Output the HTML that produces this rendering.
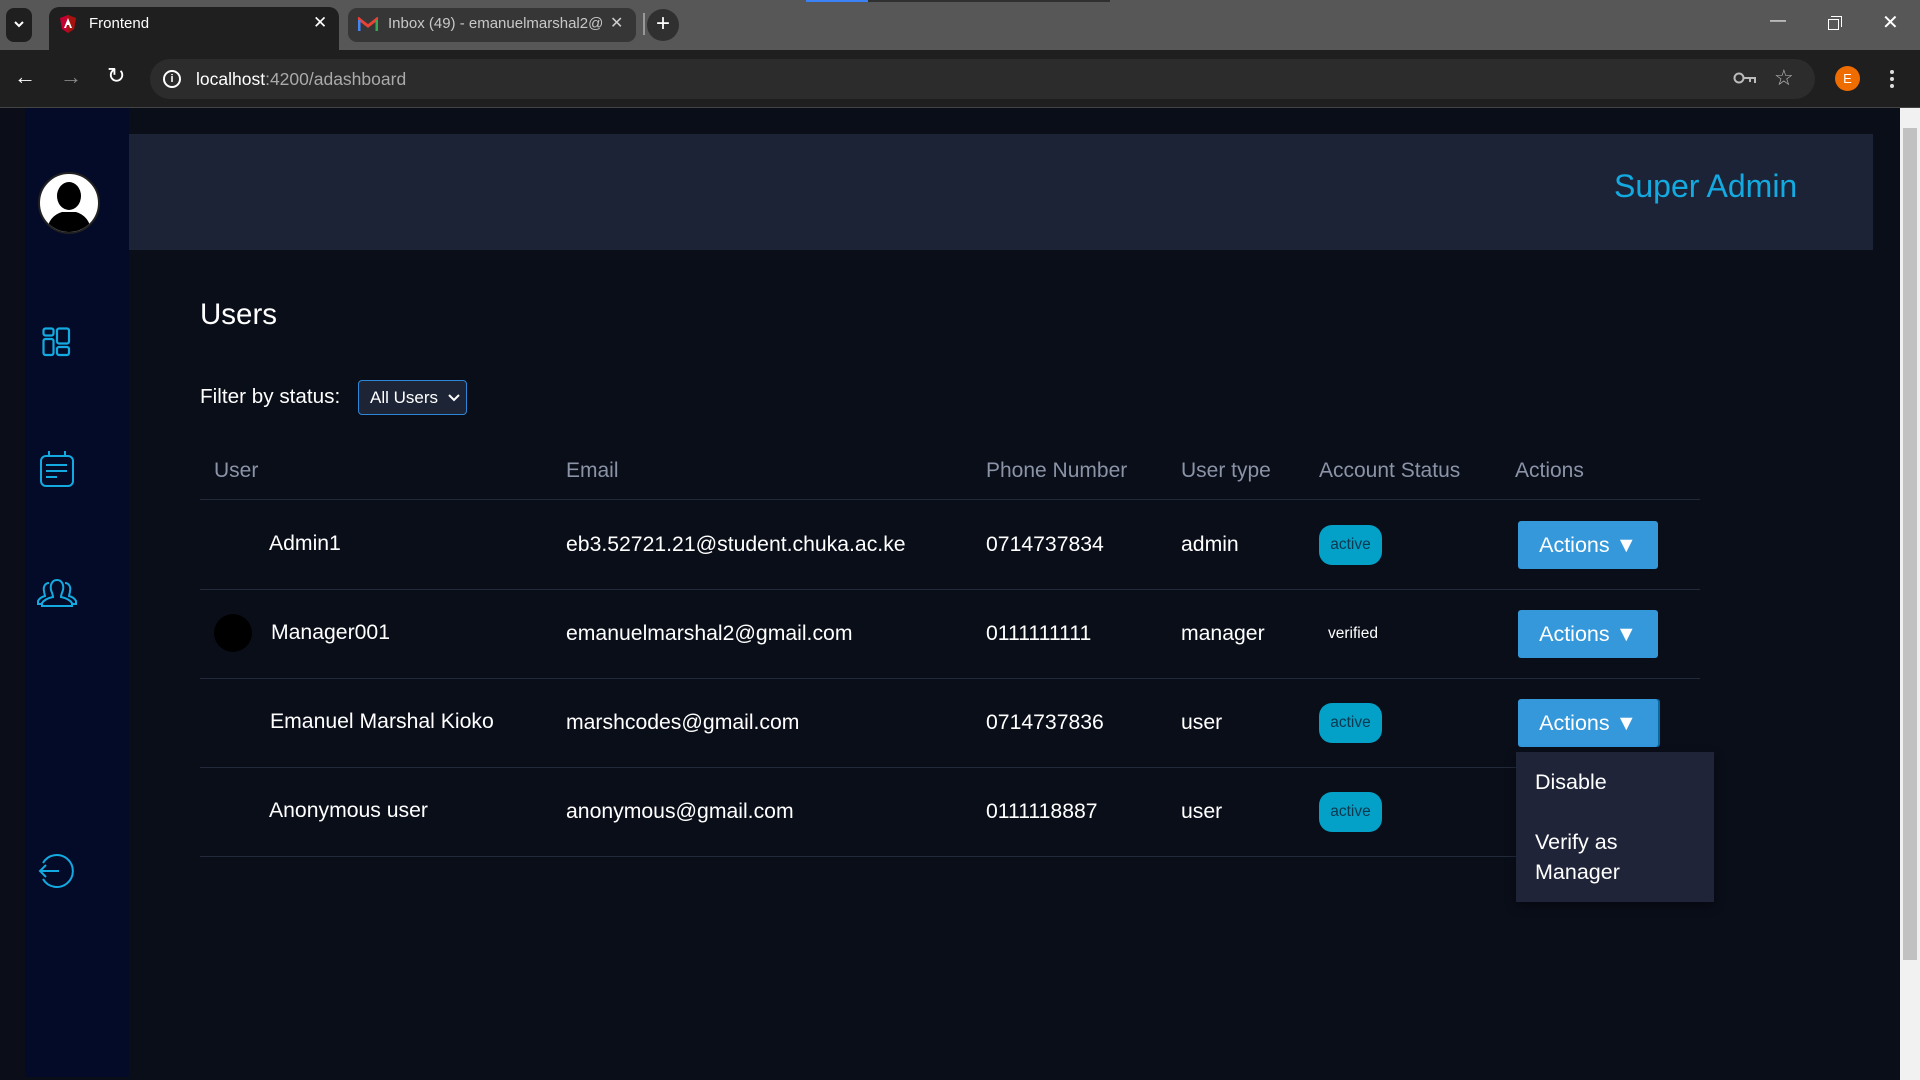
<!DOCTYPE html>
<html><head><meta charset="utf-8"><style>
*{margin:0;padding:0;box-sizing:border-box}
body{width:1920px;height:1080px;overflow:hidden;background:#0a0e19;font-family:"Liberation Sans",Arial,sans-serif;position:relative}
.abs{position:absolute}
.t{position:absolute;white-space:nowrap}
</style></head><body>
<!-- browser chrome -->
<div class="abs" style="left:0;top:0;width:1920px;height:50px;background:#575757"></div>
<div class="abs" style="left:6px;top:8px;width:26px;height:34px;background:#1f1f1f;border-radius:8px"></div>
<svg class="abs" style="left:13px;top:19px" width="12" height="10"><path d="M2 3 L6 7 L10 3" stroke="#fff" stroke-width="2" fill="none"/></svg>
<div class="abs" style="left:49px;top:7px;width:290px;height:48px;background:#1f1f1f;border-radius:10px 10px 0 0"></div>
<svg class="abs" style="left:59px;top:14px" width="18" height="20"><path d="M9 1 L17 4 L15 15 L9 19 L3 15 L1 4Z" fill="#c3002f"/><path d="M9 1 L17 4 L15 15 L9 19Z" fill="#a6120d"/><path d="M9 4 L13 14 H11 L10 11 H8 L7 14 H5Z" fill="#fff"/></svg>
<div class="t" style="left:89px;top:15px;color:#fff;font-size:15px">Frontend</div>
<div class="t" style="left:313px;top:13px;color:#fff;font-size:17px">✕</div>
<div class="abs" style="left:348px;top:8px;width:288px;height:34px;background:#363636;border-radius:9px"></div>
<svg class="abs" style="left:358px;top:17px" width="20" height="15"><path d="M1 14V2l9 7 9-7v12" stroke="#ea4335" stroke-width="3" fill="none"/><path d="M1 14V3" stroke="#4285f4" stroke-width="3"/><path d="M19 14V3" stroke="#34a853" stroke-width="3"/></svg>
<div class="t" style="left:388px;top:15px;color:#c8c8c8;font-size:15px">Inbox (49) - emanuelmarshal2@</div>
<div class="t" style="left:610px;top:13px;color:#ccc;font-size:16px">✕</div>
<div class="abs" style="left:643px;top:13px;width:2px;height:22px;background:#999"></div>
<div class="abs" style="left:647px;top:9px;width:32px;height:32px;background:#303030;border-radius:50%;color:#fff;font-size:24px;text-align:center;line-height:30px">+</div>
<div class="abs" style="left:806px;top:0;width:62px;height:2px;background:#3b82f6"></div>
<div class="abs" style="left:868px;top:0;width:242px;height:2px;background:#303030"></div>
<div class="t" style="left:1770px;top:12px;color:#fff;font-size:16px">—</div>
<div class="abs" style="left:1828px;top:19px;width:11px;height:11px;border:1.5px solid #fff"></div>
<div class="abs" style="left:1831px;top:16px;width:11px;height:11px;border-top:1.5px solid #fff;border-right:1.5px solid #fff"></div>
<div class="t" style="left:1882px;top:10px;color:#fff;font-size:20px">✕</div>
<div class="abs" style="left:0;top:50px;width:1920px;height:58px;background:#1f1f1f"></div>
<div class="abs" style="left:0;top:107px;width:1920px;height:1px;background:#444"></div>
<div class="t" style="left:14px;top:64px;color:#fff;font-size:22px">←</div>
<div class="t" style="left:60px;top:64px;color:#888;font-size:22px">→</div>
<div class="t" style="left:107px;top:63px;color:#fff;font-size:22px">↻</div>
<div class="abs" style="left:150px;top:59px;width:1665px;height:40px;background:#2c2c2c;border-radius:20px"></div>
<div class="abs" style="left:163px;top:70px;width:18px;height:18px;border:2px solid #fff;border-radius:50%;color:#fff;font-size:11px;font-weight:bold;text-align:center;line-height:14px">i</div>
<div class="t" style="left:196px;top:69px;color:#fff;font-size:17.5px">localhost<span style="color:#aaa">:4200/adashboard</span></div>
<svg class="abs" style="left:1733px;top:71px" width="24" height="14"><circle cx="6" cy="7" r="4.5" stroke="#bbb" stroke-width="2" fill="none"/><path d="M11 7H22V12M17 7V11" stroke="#bbb" stroke-width="2" fill="none"/></svg>
<div class="t" style="left:1774px;top:65px;color:#bbb;font-size:22px">☆</div>
<div class="abs" style="left:1835px;top:66px;width:25px;height:25px;background:#ef6c00;border-radius:50%;color:#fff;font-size:13px;text-align:center;line-height:25px">E</div>
<div class="abs" style="left:1890px;top:70px;width:4px;height:4px;background:#ddd;border-radius:50%;box-shadow:0 7px 0 #ddd,0 14px 0 #ddd"></div>

<!-- page -->
<div class="abs" style="left:0;top:108px;width:25px;height:972px;background:#0b0e18"></div>
<div class="abs" style="left:25px;top:108px;width:104px;height:969px;background:#040b28"></div>
<div class="abs" style="left:1900px;top:108px;width:20px;height:972px;background:#f1f1f1"></div>
<div class="abs" style="left:1903px;top:128px;width:14px;height:832px;background:#c1c1c1"></div>
<div class="abs" style="left:129px;top:134px;width:1744px;height:116px;background:#1c2336"></div>
<div class="t" style="left:1614px;top:168px;color:#13a9e1;font-size:32px">Super Admin</div>

<svg class="abs" style="left:38px;top:172px" width="62" height="62"><circle cx="31" cy="31" r="30" fill="#fff" stroke="#222" stroke-width="2"/><clipPath id="c"><circle cx="31" cy="31" r="29"/></clipPath><g clip-path="url(#c)"><ellipse cx="31" cy="24" rx="12" ry="14" fill="#000"/><path d="M8 62 Q10 44 24 40 L38 40 Q52 44 54 62Z" fill="#000"/></g></svg>
<svg class="abs" style="left:42px;top:327px" width="30" height="30" fill="none" stroke="#13a9e1" stroke-width="2.2"><rect x="1.5" y="1.5" width="10" height="7" rx="2"/><rect x="1.5" y="12" width="10" height="16" rx="2"/><rect x="15" y="1.5" width="12" height="15" rx="2"/><rect x="15" y="20" width="12" height="8" rx="2"/></svg>
<svg class="abs" style="left:39px;top:450px" width="36" height="38" fill="none" stroke="#13a9e1" stroke-width="2"><rect x="2" y="6" width="32" height="30" rx="5"/><path d="M10 1V7M26 1V7M7 15H28M7 21H28M7 27H18"/></svg>
<svg class="abs" style="left:37px;top:578px" width="40" height="30" fill="none" stroke="#13a9e1" stroke-width="2"><path d="M20 2c-5 0-7 5-6 10 1 3 2 5 2 7-5 1-9 3-11 6v3h30v-3c-2-3-6-5-11-6 0-2 1-4 2-7 1-5-1-10-6-10z"/><path d="M12 5c-4 0-6 4-5 8 0 2 1 4 1 5-4 1-6 3-7 5v3h4M28 5c4 0 6 4 5 8 0 2-1 4-1 5 4 1 6 3 7 5v3h-4"/></svg>
<svg class="abs" style="left:38px;top:852px" width="38" height="38" fill="none" stroke="#13a9e1" stroke-width="2"><path d="M5 11A16 16 0 1 1 5 27"/><path d="M21 19H2M8 13L2 19L8 25"/></svg>

<div class="t" style="left:200px;top:298px;color:#fff;font-size:29.5px">Users</div>
<div class="t" style="left:200px;top:385px;color:#fff;font-size:20.7px">Filter by status:</div>
<div class="abs" style="left:358px;top:380px;width:109px;height:35px;background:#1d2436;border:1.5px solid #2f86d6;border-radius:4px"></div>
<div class="t" style="left:370px;top:388px;color:#fff;font-size:17px">All Users</div>
<svg class="abs" style="left:448px;top:394px" width="12" height="8"><path d="M1 1L6 6L11 1" stroke="#fff" stroke-width="2" fill="none"/></svg>

<div style="color:#8b93a7;font-size:21px">
<div class="t" style="left:214px;top:459px">User</div>
<div class="t" style="left:566px;top:459px">Email</div>
<div class="t" style="left:986px;top:459px">Phone Number</div>
<div class="t" style="left:1181px;top:459px">User type</div>
<div class="t" style="left:1319px;top:459px">Account Status</div>
<div class="t" style="left:1515px;top:459px">Actions</div>
</div>
<div class="abs" style="left:200px;top:499px;width:1500px;height:1px;background:#232a3c"></div>
<div class="abs" style="left:200px;top:589px;width:1500px;height:1px;background:#232a3c"></div>
<div class="abs" style="left:200px;top:678px;width:1500px;height:1px;background:#232a3c"></div>
<div class="abs" style="left:200px;top:767px;width:1500px;height:1px;background:#232a3c"></div>
<div class="abs" style="left:200px;top:856px;width:1500px;height:1px;background:#232a3c"></div>

<div style="color:#fff;font-size:21.2px">
<div class="t" style="left:269px;top:532px">Admin1</div>
<div class="t" style="left:566px;top:533px">eb3.52721.21@student.chuka.ac.ke</div>
<div class="t" style="left:986px;top:533px">0714737834</div>
<div class="t" style="left:1181px;top:533px">admin</div>
<div class="abs" style="left:214px;top:614px;width:38px;height:38px;background:#000;border-radius:50%"></div>
<div class="t" style="left:271px;top:621px">Manager001</div>
<div class="t" style="left:566px;top:622px">emanuelmarshal2@gmail.com</div>
<div class="t" style="left:986px;top:622px">0111111111</div>
<div class="t" style="left:1181px;top:622px">manager</div>
<div class="t" style="left:270px;top:710px">Emanuel Marshal Kioko</div>
<div class="t" style="left:566px;top:711px">marshcodes@gmail.com</div>
<div class="t" style="left:986px;top:711px">0714737836</div>
<div class="t" style="left:1181px;top:711px">user</div>
<div class="t" style="left:269px;top:799px">Anonymous user</div>
<div class="t" style="left:566px;top:800px">anonymous@gmail.com</div>
<div class="t" style="left:986px;top:800px">0111118887</div>
<div class="t" style="left:1181px;top:800px">user</div>
</div>

<div style="font-size:15.5px">
<div class="abs" style="left:1319px;top:525px;width:63px;height:40px;background:#03a0c7;border-radius:13px;color:#0b3950;text-align:center;line-height:40px">active</div>
<div class="t" style="left:1328px;top:625px;color:#fff">verified</div>
<div class="abs" style="left:1319px;top:703px;width:63px;height:40px;background:#03a0c7;border-radius:13px;color:#0b3950;text-align:center;line-height:40px">active</div>
<div class="abs" style="left:1319px;top:792px;width:63px;height:40px;background:#03a0c7;border-radius:13px;color:#0b3950;text-align:center;line-height:40px">active</div>
</div>

<div style="color:#fff;font-size:21.5px">
<div class="abs" style="left:1518px;top:521px;width:140px;height:48px;background:#3498db;border-radius:3px;text-align:center;line-height:48px">Actions ▼</div>
<div class="abs" style="left:1518px;top:610px;width:140px;height:48px;background:#3498db;border-radius:3px;text-align:center;line-height:48px">Actions ▼</div>
<div class="abs" style="left:1518px;top:699px;width:140px;height:48px;background:#3498db;border-radius:3px;text-align:center;line-height:48px;box-shadow:2px 0 0 #0a6aa0">Actions ▼</div>
<div class="abs" style="left:1516px;top:752px;width:198px;height:150px;background:#1f2438;box-shadow:0 4px 10px rgba(0,0,0,.4)"></div>
<div class="t" style="left:1535px;top:770px">Disable</div>
<div class="t" style="left:1535px;top:830px">Verify as</div>
<div class="t" style="left:1535px;top:860px">Manager</div>
</div>
</body></html>
